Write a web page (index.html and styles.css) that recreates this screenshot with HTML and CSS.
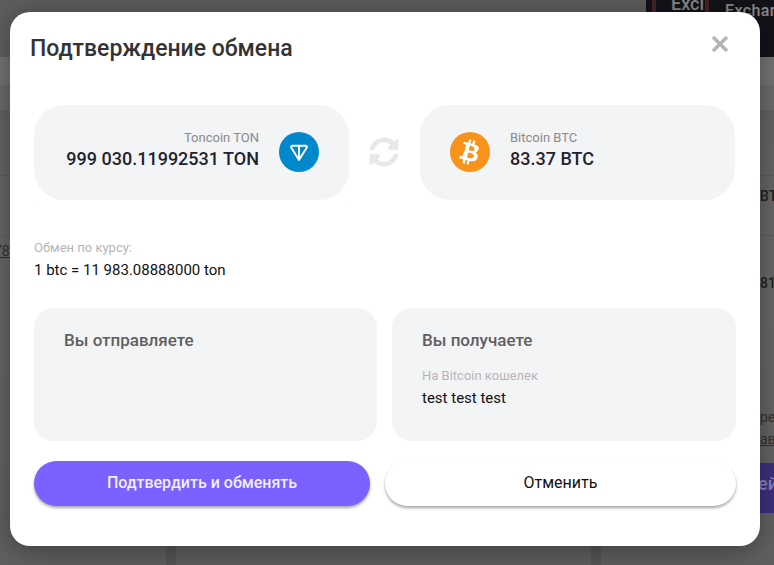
FILE: index.html
```html
<!DOCTYPE html>
<html lang="ru">
<head>
<meta charset="utf-8">
<title>Подтверждение обмена</title>
<link rel="stylesheet" href="styles.css">
</head>
<body>
<div class="page" aria-hidden="true">
  <div class="header-strip"></div>
  <div class="row-band rb1"></div>
  <div class="row-band rb2"></div>
  <div class="row-band rb3"></div>
  <div class="banner"><i class="tick t1"></i><i class="tick t2"></i><span class="b1">Excl</span><span class="b2">Exchan</span></div>
  <span class="peek peek-left">78:</span>
  <span class="peek peek-bt">BT</span>
  <span class="peek peek-81">81</span>
  <span class="peek peek-re">ре</span>
  <span class="peek peek-av">ав</span>
  <div class="peek-btn">ей</div>
  <div class="col-line line1"></div>
  <div class="col-line line2"></div>
</div>
<div class="modal">
  <header class="head">
    <h1 class="title">Подтверждение обмена</h1>
    <svg class="close" viewBox="0 0 18 18" width="18" height="18"><path d="M2 2 16 16M16 2 2 16" stroke="#b3b3b3" stroke-width="3.4" fill="none"/></svg>
  </header>
  <section class="swap">
    <div class="coin coin-from">
      <div class="coin-text right">
        <div class="coin-name">Toncoin TON</div>
        <div class="coin-amount">999 030.11992531 TON</div>
      </div>
      <svg class="coin-icon" viewBox="0 0 40 40" width="40" height="40"><circle cx="20" cy="20" r="20" fill="#0088cc"/><path d="M13.2 13.8h13.6c.9 0 1.4 1 1 1.7L20 28l-7.800-12.500c-.4-.7.1-1.700 1-1.700ZM20 14.200v13.600" fill="none" stroke="#fff" stroke-width="1.900" stroke-linejoin="round"/></svg>
    </div>
    <svg class="refresh" viewBox="0 0 512 512" width="30" height="30"><path fill="#e8e8e8" d="M370.700 133.300C339.500 104 298.900 88 255.800 88c-77.500.1-144.300 53.200-162.800 126.900-1.300 5.400-6.100 9.200-11.700 9.200H24.100c-7.500 0-13.200-6.800-11.800-14.200C33.900 94.900 134.800 8 256 8c66.400 0 126.800 26.100 171.300 68.700L463 41c15.100-15.100 41-4.400 41 17v134c0 13.300-10.700 24-24 24H346c-21.400 0-32.100-25.900-17-41l41.700-41.700zM32 296h134c21.400 0 32.100 25.900 17 41l-41.700 41.700c31.200 29.300 71.800 45.300 114.900 45.300 77.400-.1 144.300-53.100 162.800-126.800 1.300-5.400 6.100-9.200 11.700-9.200h57.300c7.500 0 13.200 6.800 11.800 14.200C478.100 417.100 377.200 504 256 504c-66.400 0-126.800-26.100-171.300-68.700L49 471c-15.100 15.100-41 4.400-41-17V320c0-13.300 10.700-24 24-24z"/></svg>
    <div class="coin coin-to">
      <svg class="coin-icon" viewBox="0 0 40 40" width="40" height="40"><circle cx="20" cy="20" r="20" fill="#f7931a"/><path fill="#fff" d="M28.900 17.500c.4-2.700-1.600-4.100-4.400-5l.9-3.600-2.200-.6-.9 3.500-1.800-.4.900-3.500-2.200-.6-.9 3.600-1.400-.3-3-.8-.6 2.300s1.600.4 1.600.4c.9.200 1 .8 1 1.300l-1 4.100-2.300 5.800c-.1.300-.4.600-1 .5l-1.600-.4-1.100 2.500 2.900.7 1.600.4-.9 3.700 2.200.6.900-3.600 1.800.4-.9 3.600 2.200.6.900-3.700c3.800.7 6.600.4 7.800-3 1-2.800 0-4.300-2-5.400 1.500-.3 2.600-1.300 2.900-3.300Zm-5.100 7.100c-.7 2.800-5.300 1.300-6.800.9l1.200-4.900c1.500.4 6.400 1.100 5.600 4Zm.7-7.200c-.6 2.500-4.400 1.200-5.700.9l1.100-4.500c1.300.3 5.200.9 4.600 3.600Z"/></svg>
      <div class="coin-text">
        <div class="coin-name">Bitcoin BTC</div>
        <div class="coin-amount">83.37 BTC</div>
      </div>
    </div>
  </section>
  <section class="rate">
    <div class="rate-label">Обмен по курсу:</div>
    <div class="rate-value">1 btc = 11 983.08888000 ton</div>
  </section>
  <section class="details">
    <div class="panel panel-send">
      <h2 class="panel-title">Вы отправляете</h2>
    </div>
    <div class="panel panel-get">
      <h2 class="panel-title">Вы получаете</h2>
      <div class="panel-label">На Bitcoin кошелек</div>
      <div class="panel-value">test test test</div>
    </div>
  </section>
  <section class="actions">
    <button class="btn btn-primary">Подтвердить и обменять</button>
    <button class="btn btn-ghost">Отменить</button>
  </section>
</div>
</body>
</html>
```
FILE: styles.css
```css
* { box-sizing: border-box; }
html, body { margin: 0; height: 100%; }
body {
  width: 774px;
  height: 565px;
  overflow: hidden;
  position: relative;
  font-family: Roboto, "Liberation Sans", sans-serif;
  background: #666;
}
.page {
  position: absolute;
  inset: 0;
  overflow: hidden;
  background: linear-gradient(180deg, #5e5e5e 0, #646464 14%, #6a6a6a 45%, #666 80%, #606060 100%);
}
.header-strip { position: absolute; left: 0; right: 0; top: 57px; height: 28px; background: #767676; }
.row-band { position: absolute; left: 0; right: 0; }
.rb1 { top: 85px; height: 25px; background: #6e6e6e; }
.rb2 { top: 175px; height: 1px; background: #5f5f5f; }
.rb3 { top: 235px; height: 1px; background: #5f5f5f; }
.banner {
  position: absolute;
  left: 646px; top: 0;
  width: 128px; height: 57px;
  overflow: hidden;
  background: #15131a;
  color: #8c8c8c;
  font-weight: 500;
}
.tick { position: absolute; top: 0; width: 4px; height: 12px; background: #4a2226; }
.t1 { left: 6px; }
.t2 { left: 59px; }
.b1 { position: absolute; left: 25px; top: -7px; font-size: 18px; line-height: 22px; }
.b2 { position: absolute; left: 79px; top: 1px; font-size: 16px; line-height: 20px; letter-spacing: .4px; }
.peek { position: absolute; font-size: 14px; color: #222; }
.peek-left { left: -6px; top: 243px; text-decoration: underline; color: #333; }
.peek-bt { left: 760px; top: 188px; font-weight: 500; }
.peek-81 { left: 760px; top: 275px; font-weight: 500; }
.peek-re { left: 760px; top: 409px; color: #333; }
.peek-av { left: 760px; top: 431px; text-decoration: underline; color: #333; }
.peek-btn { position: absolute; left: 736px; top: 463px; width: 60px; height: 50px; padding: 10px 0 0 22px; background: #3f3180; color: #8f84c4; font-size: 18px; font-weight: 500; }
.col-line { position: absolute; top: 546px; bottom: 0; width: 10px; background: rgba(0,0,0,.1); }
.line1 { left: 166px; }
.line2 { left: 591px; }
.modal {
  position: absolute;
  left: 10px; top: 12px;
  width: 750px; height: 534px;
  background: #fff;
  border-radius: 20px;
  box-shadow: 0 4px 30px rgba(0,0,0,.4);
  padding: 0 24px;
}
.head {
  display: flex;
  justify-content: space-between;
  align-items: flex-start;
  height: 93px;
  margin: 0 -4px;
}
.title {
  margin: 22px 0 0;
  font-size: 23px;
  line-height: 30px;
  font-weight: 500;
  color: #333;
}
.close { margin: 23px 11px 0 0; }
.swap { display: flex; align-items: center; height: 95px; }
.coin {
  width: 315px; height: 95px;
  background: #f3f4f6;
  border-radius: 30px;
  display: flex;
  align-items: center;
  flex: none;
}
.coin-from { justify-content: flex-end; padding-right: 30px; gap: 20px; }
.coin-to { padding-left: 30px; gap: 20px; margin-left: 21px; }
.coin-icon { margin-bottom: 1px; }
.refresh { margin: 0 0 1px 20px; flex: none; }
.coin-text { margin-bottom: 4px; }
.coin-text.right { text-align: right; }
.coin-name { font-size: 13px; line-height: 16px; color: #8a8a8f; margin-bottom: 1px; }
.coin-amount { font-size: 18px; line-height: 24px; font-weight: 500; color: #22222e; }
.rate { margin-top: 40px; height: 68px; }
.rate-label { font-size: 13px; line-height: 16px; color: #b5b5b5; }
.rate-value { font-size: 15px; line-height: 20px; margin-top: 4px; color: #111; }
.details { display: flex; gap: 15px; }
.panel {
  width: 343px; height: 133px;
  background: #f3f4f6;
  border-radius: 20px;
  padding: 22px 30px 0;
}
.panel-get { width: 344px; }
.panel-title { margin: 0; font-size: 17px; line-height: 20px; font-weight: 500; color: #5f5f5f; }
.panel-label { font-size: 13px; line-height: 16px; color: #b8b4b4; margin-top: 18px; }
.panel-value { font-size: 15px; line-height: 20px; margin-top: 4px; color: #111; }
.actions { display: flex; gap: 15px; margin-top: 20px; }
.btn {
  height: 45px;
  border: 0;
  border-radius: 23px;
  padding: 0 0 2px;
  font-family: inherit;
  font-size: 16px;
  box-shadow: 0 2px 3px rgba(0,0,0,.35);
}
.btn-primary { width: 336px; background: #7b61ff; color: #f2efff; font-weight: 500; }
.btn-ghost { width: 351px; background: #fff; color: #111; }
```
